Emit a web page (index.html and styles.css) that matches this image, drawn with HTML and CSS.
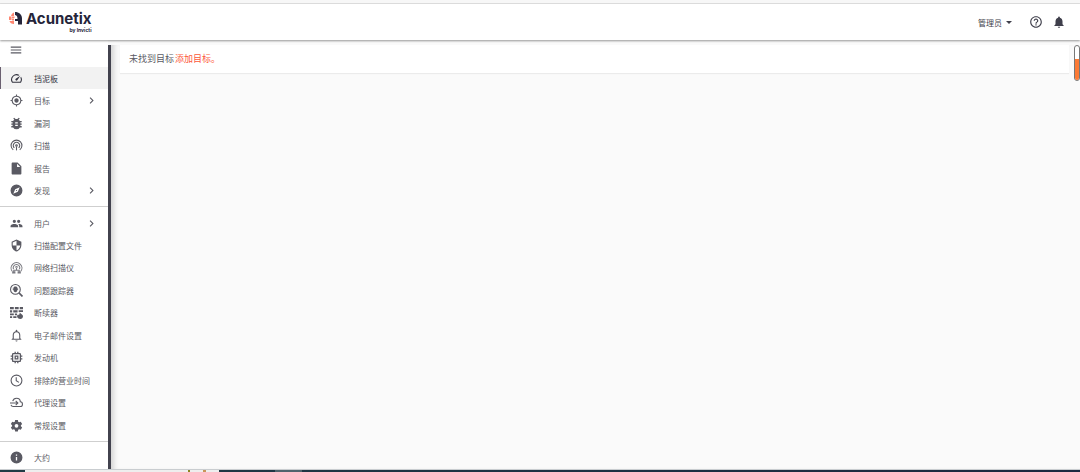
FILE: index.html
```
<!DOCTYPE html>
<html lang="zh-CN">

<head>
    <meta charset="utf-8">
    <title>Acunetix</title>
    <link rel="stylesheet" href="styles.css">
</head>

<body>
	<div class="window-top"></div>
	<header class="header">
		<a class="logo" href="#">
			<svg class="logo-mark" viewBox="0 0 26 26">
				<path fill="#ff8570" d="M10 1v7H4C5 4 7 2 10 1zM0 9h5v7H0zM6 9h5v3H6zM6 13h4v4H6zM1 18h9v6C5 24 2 22 1 18z"/>
				<path fill="#25253a" d="M12 0c8 0 14 5 14 13v12h-8v-7h-6v-4h5c0-5-1-7-5-8z"/>
			</svg>
			<span class="logo-text">
				<span class="logo-name">Acunetix</span>
				<span class="logo-by">by Invicti</span>
			</span>
		</a>
		<div class="header-tools">
			<button class="user">管理员<span class="caret"></span></button>
			<button class="tool" aria-label="帮助">
				<svg viewBox="0 0 24 24"><path d="M11 18h2v-2h-2v2zm1-16C6.480 2 2 6.480 2 12s4.480 10 10 10 10-4.480 10-10S17.520 2 12 2zm0 18c-4.410 0-8-3.590-8-8s3.590-8 8-8 8 3.590 8 8-3.590 8-8 8zm0-14c-2.210 0-4 1.790-4 4h2c0-1.100.9-2 2-2s2 .9 2 2c0 2-3 1.750-3 5h2c0-2.250 3-2.500 3-5 0-2.210-1.790-4-4-4z"/></svg>
			</button>
			<button class="tool" aria-label="通知">
				<svg viewBox="0 0 24 24"><path d="M12 22c1.100 0 2-.9 2-2h-4c0 1.100.9 2 2 2zm6-6v-5c0-3.070-1.640-5.640-4.500-6.320V4c0-.83-.67-1.500-1.500-1.500s-1.500.67-1.500 1.500v.68C7.630 5.360 6 7.920 6 11v5l-2 2v1h16v-1l-2-2z"/></svg>
			</button>
		</div>
	</header>

	<div class="page">
		<nav class="sidebar">
			<button class="menu-toggle" aria-label="菜单">
				<svg viewBox="0 0 24 24"><path d="M3 18h18v-2H3v2zm0-5h18v-2H3v2zm0-7v2h18V6H3z"/></svg>
			</button>
			<ul class="menu">
				<li class="active"><a href="#">
					<svg viewBox="0 0 24 24"><path d="M20.380 8.570l-1.230 1.850a8 8 0 0 1-.22 7.580H5.070A8 8 0 0 1 15.580 6.850l1.850-1.230A10 10 0 0 0 3.350 19a2 2 0 0 0 1.720 1h13.850a2 2 0 0 0 1.740-1 10 10 0 0 0-.27-10.440zm-9.790 6.840a2 2 0 0 0 2.830 0l5.660-8.490-8.490 5.660a2 2 0 0 0 0 2.830z"/></svg>
					<span>挡泥板</span></a></li>
				<li><a href="#">
					<svg viewBox="0 0 24 24"><path d="M12 8c-2.210 0-4 1.790-4 4s1.790 4 4 4 4-1.790 4-4-1.790-4-4-4zm8.940 3A8.994 8.994 0 0 0 13 3.060V1h-2v2.060A8.994 8.994 0 0 0 3.060 11H1v2h2.060A8.994 8.994 0 0 0 11 20.940V23h2v-2.060A8.994 8.994 0 0 0 20.940 13H23v-2h-2.060zM12 19c-3.870 0-7-3.130-7-7s3.130-7 7-7 7 3.130 7 7-3.130 7-7 7z"/></svg>
					<span>目标</span>
					<svg class="arrow" viewBox="0 0 24 24"><path d="M8.600 16.600 13.200 12 8.600 7.400 10 6l6 6-6 6z"/></svg></a></li>
				<li><a href="#">
					<svg viewBox="2 2 20 20"><path d="M20 8h-2.810c-.45-.78-1.070-1.450-1.820-1.960L17 4.410 15.590 3l-2.170 2.170a6 6 0 0 0-2.830 0L8.410 3 7 4.410l1.620 1.630C7.880 6.550 7.260 7.220 6.810 8H4v2h2.090c-.05.33-.09.66-.09 1v1H4v2h2v1c0 .34.04.67.09 1H4v2h2.810a5.990 5.990 0 0 0 10.380 0H20v-2h-2.090c.05-.33.09-.66.09-1v-1h2v-2h-2v-1c0-.34-.04-.67-.09-1H20V8zm-6 8h-4v-2h4v2zm0-4h-4v-2h4v2z"/></svg>
					<span>漏洞</span></a></li>
				<li><a href="#">
					<svg class="lines" viewBox="0 0 24 24"><path d="M6 20a10 10 0 1 1 12 0M8 16.500a6 6 0 1 1 8 0"/><path d="M12 14v7"/><circle cx="12" cy="12" r="1.500"/></svg>
					<span>扫描</span></a></li>
				<li><a href="#">
					<svg viewBox="0 0 24 24"><path d="M5 1C3.900 1 3 1.900 3 3v18c0 1.100.9 2 2 2h14c1.100 0 2-.9 2-2V8l-7-7zm8 8V3l6 6z"/></svg>
					<span>报告</span></a></li>
				<li><a href="#">
					<svg viewBox="0 0 24 24"><path d="M12 10.900a1.100 1.100 0 1 0 0 2.200 1.100 1.100 0 0 0 0-2.200zM12 1a11 11 0 1 0 0 22 11 11 0 0 0 0-22zm2.400 13.400L6 18l3.600-8.400L18 6z"/></svg>
					<span>发现</span>
					<svg class="arrow" viewBox="0 0 24 24"><path d="M8.600 16.600 13.200 12 8.600 7.400 10 6l6 6-6 6z"/></svg></a></li>
				<li class="divider"></li>
				<li><a href="#">
					<svg viewBox="0 0 24 24"><path d="M16 11a3 3 0 1 0 0-6 3 3 0 0 0 0 6zm-8 0a3 3 0 1 0 0-6 3 3 0 0 0 0 6zm0 2c-2.330 0-7 1.170-7 3.500V19h14v-2.500C15 14.170 10.330 13 8 13zm8 0c-.29 0-.62.02-.97.050 1.160.84 1.970 1.970 1.970 3.450V19h6v-2.500c0-2.330-4.670-3.500-7-3.500z"/></svg>
					<span>用户</span>
					<svg class="arrow" viewBox="0 0 24 24"><path d="M8.600 16.600 13.200 12 8.600 7.400 10 6l6 6-6 6z"/></svg></a></li>
				<li><a href="#">
					<svg viewBox="0 0 24 24"><path d="M12 1 3 5v6c0 5.550 3.840 10.740 9 12 5.160-1.260 9-6.450 9-12V5l-9-4zm0 10.990h7c-.53 4.120-3.280 7.790-7 8.940V12H5V6.300l7-3.110v8.800z"/></svg>
					<span>扫描配置文件</span></a></li>
				<li><a href="#">
					<svg class="lines soft" viewBox="0 0 24 24"><path d="M4 19a10 10 0 1 1 16 0M6.500 15a6 6 0 1 1 11 0M10 12a2 2 0 1 1 4 0"/><path d="M12 12v5M7 20v-3h10v3"/><path d="M5 20h4v2H5zM15 20h4v2h-4z"/></svg>
					<span>网络扫描仪</span></a></li>
				<li><a href="#">
					<svg class="lines" viewBox="0 0 24 24"><circle cx="10" cy="10" r="9"/><path class="thick" d="m16.500 16.500 6.500 6.500"/><path class="solid" d="M10 4.500c2 0 3 1 3.200 2.500H15v1.500h-1.500v1H15V11h-1.500c0 2.500-1.300 4-3.500 4s-3.500-1.500-3.500-4H5V9.500h1.500v-1H5V7h1.800C7 5.500 8 4.500 10 4.500z"/></svg>
					<span>问题跟踪器</span></a></li>
				<li><a href="#">
					<svg viewBox="0 0 24 24"><path d="M0 2h7v4H0zM9 2h7v4H9zM18 2h6v4h-6zM0 8h4v4H0zM6 8h8v4H6zM16 8h8v3h-8zM0 14h7v3H0zM9 14h4v3H9zM0 19h4v3H0zM6 19h6v3H6zM18 11c0 3 6 4 6 8 0 3-2 5-5 5s-6-2-6-5c0-2 1-3 2-4l1 2c2-2 2-4 2-6z"/></svg>
					<span>断续器</span></a></li>
				<li><a href="#">
					<svg viewBox="0 0 24 24"><path d="M12 23a2 2 0 0 0 2-2h-4a2 2 0 0 0 2 2zm7-6v-6c0-3.350-2.080-6.150-5.500-6.820V3a1.500 1.500 0 0 0-3 0v1.180C7.080 4.850 5 7.650 5 11v6l-2 2v1h18v-1zm-2 1H7v-7c0-2.760 2-5 5-5s5 2.240 5 5z"/></svg>
					<span>电子邮件设置</span></a></li>
				<li><a href="#">
					<svg viewBox="2 2 20 20"><path d="M15 9H9v6h6V9zm-2 4h-2v-2h2v2zm8-2V9h-2V7c0-1.100-.9-2-2-2h-2V3h-2v2h-2V3H9v2H7c-1.100 0-2 .9-2 2v2H3v2h2v2H3v2h2v2c0 1.100.9 2 2 2h2v2h2v-2h2v2h2v-2h2c1.100 0 2-.9 2-2v-2h2v-2h-2v-2h2zm-4 6H7V7h10v10z"/></svg>
					<span>发动机</span></a></li>
				<li><a href="#">
					<svg class="lines" viewBox="0 0 24 24"><circle cx="12" cy="12" r="10"/><path d="M11.500 6v6.500l5 3"/></svg>
					<span>排除的营业时间</span></a></li>
				<li><a href="#">
					<svg class="lines" viewBox="0 0 24 24"><path d="M5 9.500C6 6 9 4 12 4c4 0 7 3 7 6.500 2.500 0 4 2 4 4.500s-2 4.500-4 4.500H6c-2 0-3.500-1-4.200-3"/><path d="M0 13h14M10.500 9l4 4-4 4"/></svg>
					<span>代理设置</span></a></li>
				<li><a href="#">
					<svg viewBox="0 0 24 24"><path fill-rule="evenodd" d="M9.500 2h5l.6 3 1.900 1.100 2.900-1 2.500 4.300-2.300 2v2.200l2.300 2-2.500 4.300-2.900-1-1.900 1.100-.6 3h-5l-.6-3L7 18.900l-2.900 1-2.500-4.300 2.300-2v-2.200l-2.300-2 2.500-4.300 2.900 1L8.900 5zM12 9a3.500 3.500 0 1 0 0 7 3.500 3.500 0 0 0 0-7z"/></svg>
					<span>常规设置</span></a></li>
				<li class="divider"></li>
				<li><a href="#">
					<svg viewBox="0 0 24 24"><path d="M12 1a11 11 0 1 0 0 22 11 11 0 0 0 0-22zm1.200 16.500h-2.400V11h2.400zm0-8.700h-2.400V6.400h2.400z"/></svg>
					<span>大约</span></a></li>
			</ul>
		</nav>

		<main class="content">
			<p class="card">未找到目标<a href="#">添加目标。</a></p>
			<div class="scroll"><div class="scroll-thumb"></div></div>
		</main>
	</div>

	<footer class="taskbar">
		<div class="task-search"></div>
		<div class="task-app"></div>
	</footer>
</body>

</html>
```
FILE: styles.css
```
* {
	box-sizing: border-box;
}

body {
	margin: 0;
	height: 100vh;
	display: flex;
	flex-direction: column;
	overflow: hidden;
	font-family: "Liberation Sans", "Noto Sans CJK SC", sans-serif;
	font-size: 8px;
	color: #5a5a63;
	background-color: #fafafa;
}

a {
	color: inherit;
	text-decoration: none;
}

button {
	padding: 0;
	border: none;
	background: none;
	font: inherit;
	color: inherit;
}

svg {
	display: block;
	fill: currentColor;
}

.window-top {
	height: 4px;
	background-color: #f7f7f7;
	border-bottom: 1px solid #e2e2e2;
}

.header {
	position: relative;
	height: 36px;
	display: flex;
	justify-content: space-between;
	align-items: center;
	padding: 0 14px 0 9px;
	background-color: white;
	box-shadow: 0 1px 2px rgba(0, 0, 0, 0.4);
}

.logo {
	display: flex;
	align-items: flex-start;
	gap: 4px;
	color: #25253a;
}

.logo-mark {
	width: 13px;
	height: 13px;
	margin-top: 1px;
}

.logo-text {
	display: flex;
	flex-direction: column;
	align-items: flex-end;
	font-family: Inter, sans-serif;
	font-weight: 700;
}

.logo-name {
	font-size: 15px;
	line-height: 16px;
}

.logo-by {
	font-size: 5px;
	line-height: 6px;
}

.header-tools {
	display: flex;
	align-items: center;
	color: #3f3f4b;
}

.user {
	display: flex;
	align-items: center;
	gap: 4px;
	margin-right: 17px;
}

.caret {
	border: 3px solid transparent;
	border-top-color: #3f3f4b;
	border-bottom: none;
}

.tool + .tool {
	margin-left: 9px;
}

.tool svg {
	width: 14px;
	height: 14px;
}

.page {
	flex: 1;
	min-height: 0;
	display: flex;
}

.sidebar {
	width: 108px;
	display: flex;
	flex-direction: column;
	background-color: white;
}

.menu-toggle {
	height: 20px;
	margin-bottom: 7px;
	padding-left: 9px;
}

.menu-toggle svg {
	width: 14px;
	height: 14px;
}

.menu {
	flex: 1;
	display: flex;
	flex-direction: column;
	margin: 0;
	padding: 0;
	list-style: none;
}

.menu li {
	flex: 1;
}

.menu .divider {
	flex: none;
	height: 1px;
	margin: 4px 0 5px;
	background-color: #cfcfcf;
}

.menu a {
	height: 100%;
	display: flex;
	align-items: center;
	gap: 11px;
	padding: 0 10px;
}

.menu svg {
	width: 13px;
	height: 13px;
}

.menu .arrow {
	margin-left: auto;
}

.menu .active {
	background-color: #f2f2f2;
	box-shadow: inset 1px 0 #6a6070;
	color: #33333f;
}

.menu .lines {
	fill: none;
	stroke: currentColor;
	stroke-width: 2;
}

.menu .soft {
	opacity: 0.8;
}

.menu .thick {
	stroke-width: 3;
}

.menu .solid {
	fill: currentColor;
	stroke: none;
}

.content {
	flex: 1;
	display: flex;
	align-items: flex-start;
	gap: 5px;
	padding-left: 9px;
	margin-top: 5px;
	border-left: 3px solid #42424e;
	box-shadow: inset 6px 0 5px -3px rgba(0, 0, 0, 0.15);
}

.card {
	flex: 1;
	margin: 0;
	padding: 7px 9px;
	font-size: 9px;
	line-height: 14px;
	background-color: white;
	box-shadow: 0 1px 1px rgba(0, 0, 0, 0.06);
}

.card a {
	margin-left: 1px;
	color: #fc5738;
}

.scroll {
	width: 6px;
	height: 36px;
	display: flex;
	align-items: flex-end;
	border: 1px solid #777;
	border-radius: 3px;
	background-color: white;
	overflow: hidden;
}

.scroll-thumb {
	width: 100%;
	height: 21px;
	background-color: #fc7a35;
}

.taskbar {
	height: 3px;
	display: flex;
	border-top: 1px solid #c9cdd0;
	background: linear-gradient(to right, #203b45, #1b2840);
}

.task-search {
	width: 194px;
	margin-left: 25px;
	background: linear-gradient(to right, #eee 163px, #8d8420 163px, #8d8420 165px, #eee 165px, #eee 178px, #c8955a 178px, #c8955a 181px, #eee 181px);
}

.task-app {
	width: 27px;
	margin-left: 56px;
	background-color: #50636c;
}
```
